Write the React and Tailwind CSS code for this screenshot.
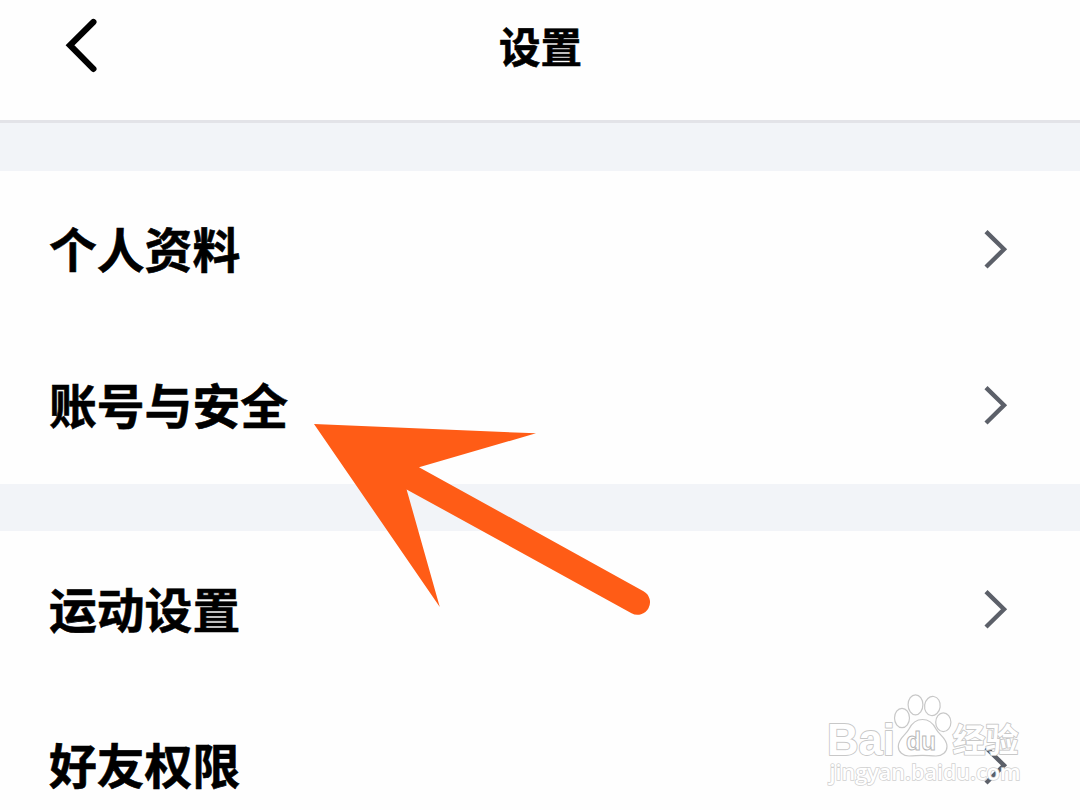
const groups = [
  ['个人资料', '账号与安全'],
  ['运动设置', '好友权限'],
];

function BackIcon() {
  return (
    <svg className="w-9 h-14" viewBox="0 0 36 56" fill="none" stroke="#000" strokeWidth="6.2" strokeLinecap="round">
      <path d="M29.4 5 6 28.2 29.4 51.9" />
    </svg>
  );
}

function ChevronIcon() {
  return (
    <svg className="w-6 h-10" viewBox="0 0 24 40" fill="none" stroke="#5c6069" strokeWidth="4.4">
      <path d="M2 2.6 20 20.3 2 38" />
    </svg>
  );
}

function SettingRow({ label }) {
  return (
    <button type="button" className="flex h-[156px] w-full shrink-0 items-center justify-between pl-12 pr-[72px]">
      <span className="mb-0.5 ml-px text-[47.8px] leading-none font-bold [-webkit-text-stroke:0.6px_#000]">{label}</span>
      <ChevronIcon />
    </button>
  );
}

function Arrow() {
  return (
    <svg className="absolute left-[310px] top-[420px]" width="345" height="200" viewBox="310 420 345 200">
      <path
        fill="#ff5c16"
        d="M314 424 536 433.3 419 467.2 643.5 591.2A12.3 12.3 0 0 1 631.5 613.2L406.6 489.4 439.8 607Z"
      />
    </svg>
  );
}

function Watermark() {
  return (
    <svg
      className="absolute left-[820px] top-[688px]"
      width="210"
      height="104"
      viewBox="820 688 210 104"
      fill="#fff"
      stroke="#c8c8c8"
      strokeWidth="1.2"
    >
      <ellipse cx="902" cy="718" rx="7.5" ry="9.6" />
      <ellipse cx="915.5" cy="704.8" rx="7.4" ry="10" />
      <ellipse cx="932.4" cy="706" rx="7.8" ry="9.6" transform="rotate(8 932.4 706)" />
      <ellipse cx="943.3" cy="722.3" rx="7.6" ry="9.4" />
      <path d="M922.5 719.5C916 719.5 912 723 909 729C906 735 898.3 738 898.3 746.5C898.3 752 903 756 909 756C914 756 918 755.3 922.5 755.3C927 755.3 931 756 936 756C942.5 756 947 752 947 746.5C947 738 939 735 936 729C933 723 929 719.5 922.5 719.5Z" />
      <g className="font-bold" strokeLinejoin="round" paintOrder="stroke">
        <text x="827" y="754.5" fontSize="44" strokeWidth="1.8" textLength="68" lengthAdjust="spacingAndGlyphs" fontFamily="Liberation Sans, sans-serif">Bai</text>
        <text x="952.5" y="752" fontSize="33" strokeWidth="1.8" fontFamily="Noto Sans CJK SC, sans-serif">经验</text>
      </g>
      <text x="906" y="750" fontSize="26" textLength="30" lengthAdjust="spacingAndGlyphs" className="font-bold" strokeWidth="1" stroke="#b8b8b8" fontFamily="Liberation Sans, sans-serif">du</text>
      <text x="829.5" y="780" fontSize="22" textLength="191" lengthAdjust="spacingAndGlyphs" paintOrder="stroke" strokeWidth="1.5" stroke="#d0d0d0" className="font-semibold" fontFamily="Open Sans, sans-serif">jingyan.baidu.com</text>
    </svg>
  );
}

export default function App() {
  return (
    <div className="relative flex h-[810px] w-[1080px] flex-col overflow-hidden bg-[#f2f4f8] font-['Noto_Sans_CJK_SC',sans-serif] text-black">
      <header className="grid h-[123px] shrink-0 grid-cols-3 items-start border-b-[3px] border-[#e3e3e8] bg-[#fefefe]">
        <button type="button" aria-label="返回" className="ml-16 mt-[17px] w-9">
          <BackIcon />
        </button>
        <h1 className="mt-[25px] pl-px text-center text-[41.5px] leading-none font-bold [-webkit-text-stroke:0.6px_#000]">设置</h1>
      </header>

      <main className="flex flex-col gap-[47px] pt-12">
        {groups.map((rows) => (
          <section key={rows[0]} className="flex h-[313px] shrink-0 flex-col bg-[#fefefe]">
            {rows.map((label) => (
              <SettingRow key={label} label={label} />
            ))}
          </section>
        ))}
      </main>

      <Arrow />
      <Watermark />
    </div>
  );
}
